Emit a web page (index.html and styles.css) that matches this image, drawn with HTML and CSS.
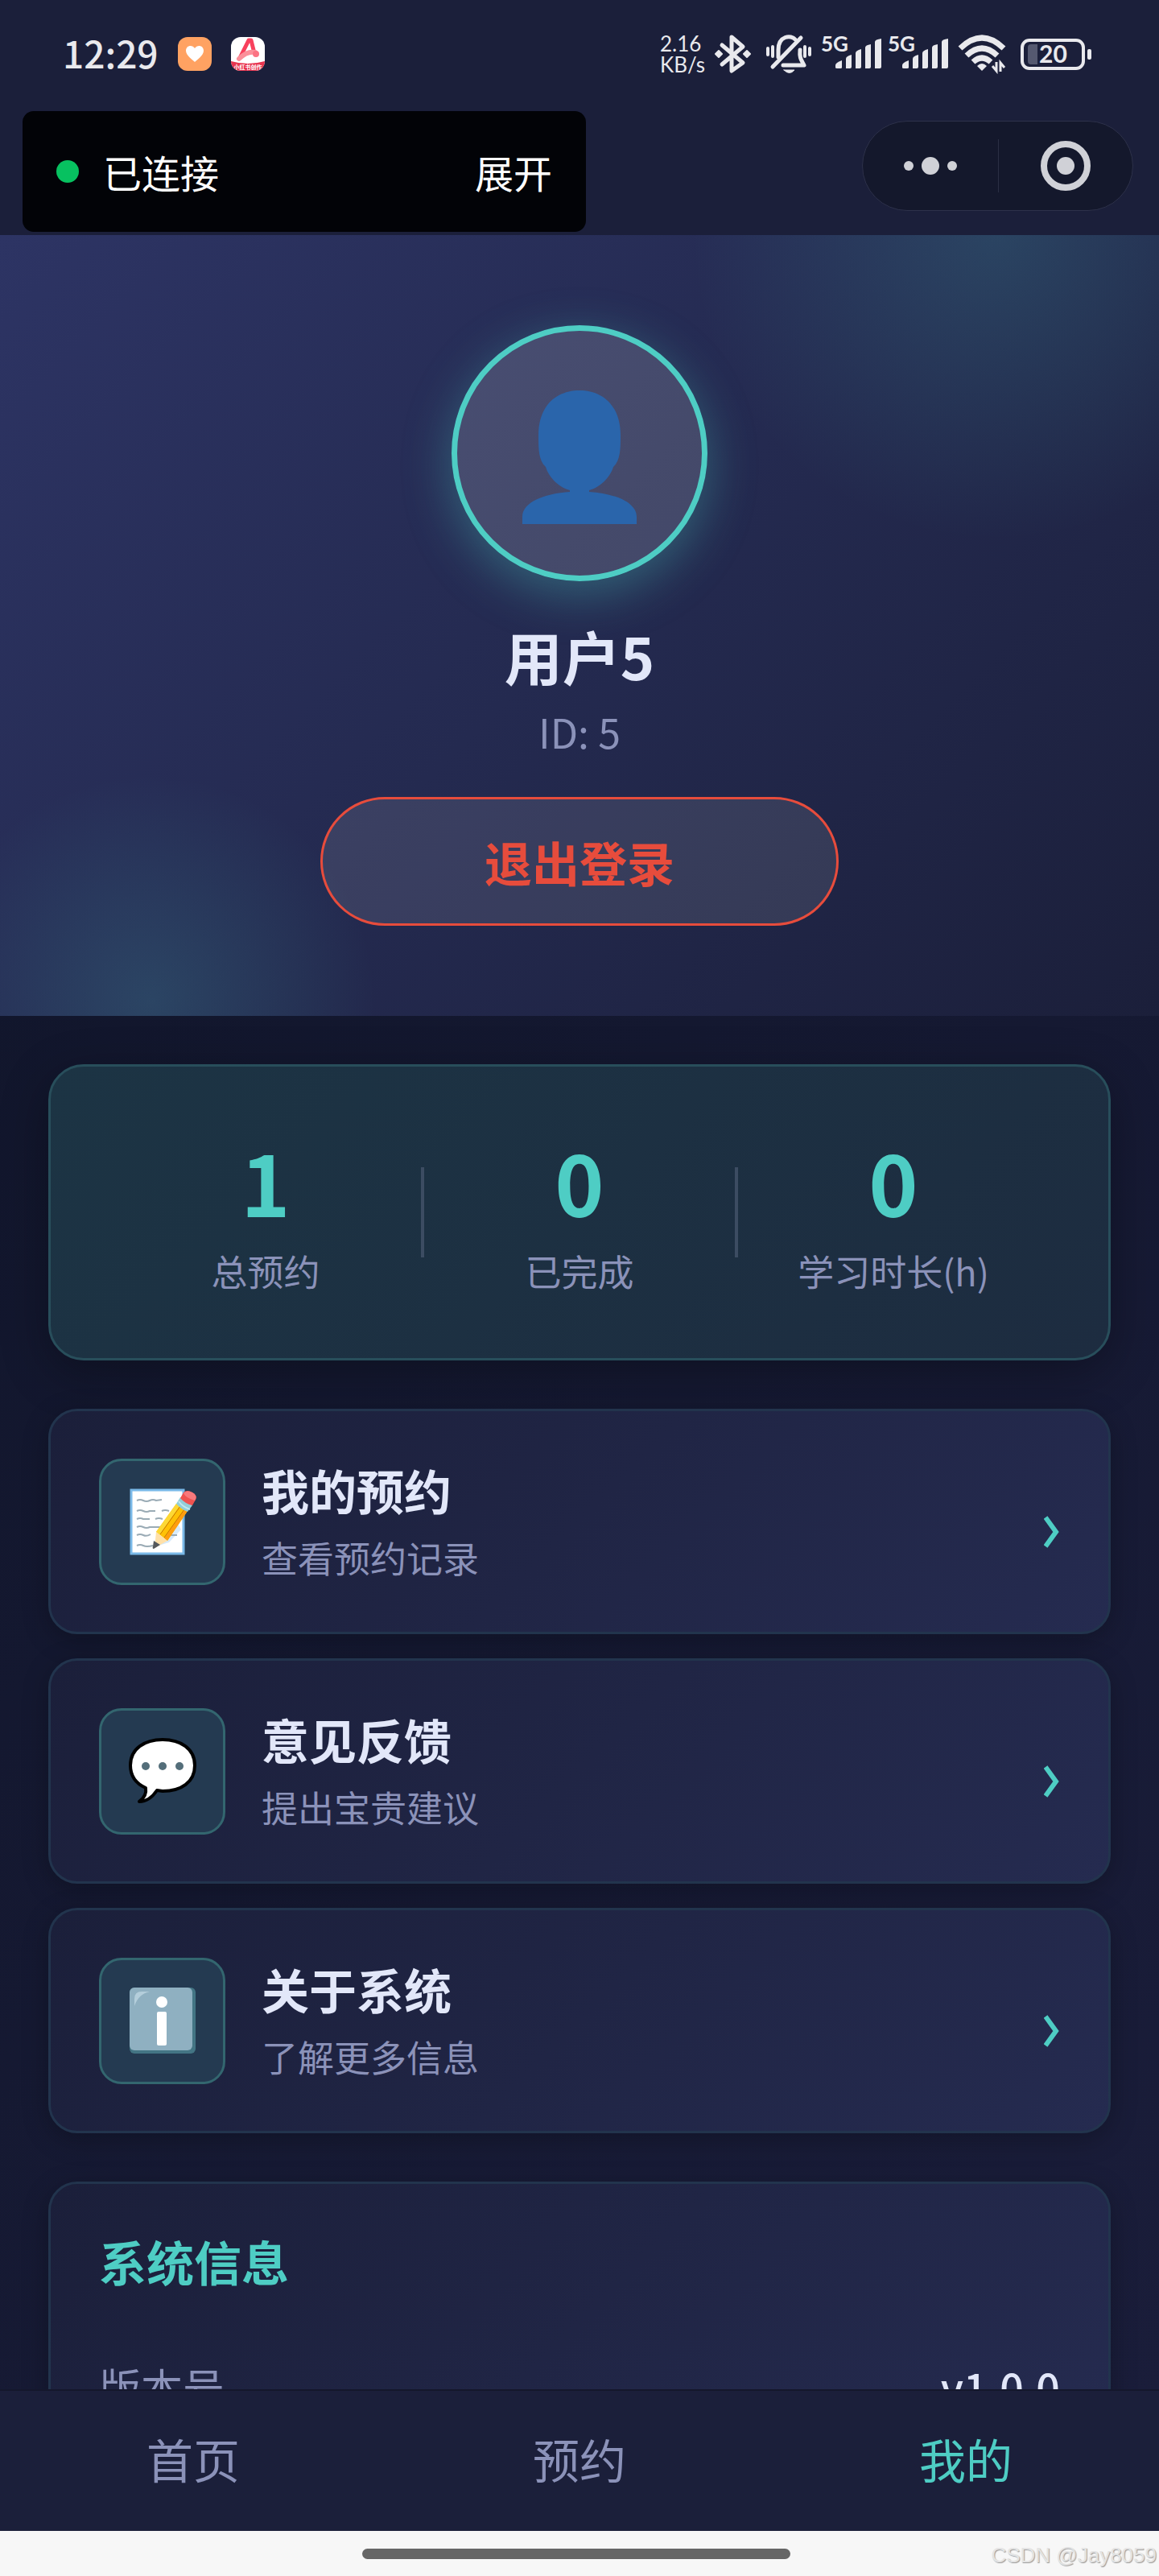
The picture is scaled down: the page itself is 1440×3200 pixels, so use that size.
FILE: index.html
```html
<!DOCTYPE html>
<html lang="zh-CN">
<head>
<meta charset="utf-8">
<meta name="viewport" content="width=device-width, initial-scale=1">
<title>我的</title>
<link rel="stylesheet" href="styles.css">
</head>
<body>
<div class="screen">
  <header class="top">
    <div class="status">
      <div class="status-left">
        <span class="clock">12:29</span>
        <svg class="app-icon" viewBox="0 0 42 42" aria-hidden="true">
          <rect width="42" height="42" rx="12" fill="#ffa262"/>
          <path d="M21 31 C19 29 10 23 10 17 C10 10 18 9 21 14 C24 9 32 10 32 17 C32 23 23 29 21 31Z" fill="#fff"/>
        </svg>
        <svg class="app-icon" viewBox="0 0 42 42" aria-hidden="true">
          <defs><clipPath id="badge"><rect width="42" height="42" rx="12"/></clipPath></defs>
          <g clip-path="url(#badge)">
            <rect width="42" height="42" fill="#fff"/>
            <path d="M0 30 Q21 36 42 30 V42 H0Z" fill="#e8344f"/>
            <path d="M11 26 L22 4 H25 L29 20" fill="none" stroke="#f8405c" stroke-width="5" stroke-linejoin="round"/>
            <path d="M10 27 Q20 17 30 19" fill="none" stroke="#fb8f99" stroke-width="6" stroke-linecap="round"/>
            <circle cx="31" cy="21" r="4" fill="#fb7383"/>
            <text x="21" y="40" class="badge-text" text-anchor="middle">小红书创作</text>
          </g>
        </svg>
      </div>
      <div class="status-right">
        <div class="speed"><span>2.16</span><span>KB/s</span></div>
        <svg width="52" height="50" viewBox="0 0 52 50" fill="none" stroke="#e9e9ed" stroke-width="5" stroke-linejoin="round" stroke-linecap="round" aria-hidden="true">
          <path d="M9 14 L35 36 L21 46 V4 L35 16 L9 38"/>
          <path d="M5 21 l4 4 l-4 4 l-4 -4Z M40 21 l4 4 l-4 4 l-4 -4Z" fill="#e9e9ed" stroke-width="2"/>
        </svg>
        <svg width="56" height="50" viewBox="0 0 56 50" fill="none" stroke="#e9e9ed" stroke-width="5" stroke-linecap="round" stroke-linejoin="round" aria-hidden="true">
          <path d="M43 5 L8 41"/>
          <path d="M15 29 V20 C15 2 31 1 36 7" />
          <path d="M42 20 C41 31 44 33 47 39 H21"/>
          <path d="M2 18 v8 M8 16 v12 M48 16 v12 M54 18 v8" stroke-width="4"/>
          <path d="M22 45 H35 Q29 52 22 45Z" fill="#e9e9ed" stroke-width="1"/>
        </svg>
        <div class="signals">
          <svg width="75" height="50" viewBox="0 0 75 50" fill="#e9e9ed" aria-label="5G">
            <text x="0" y="22" class="network">5G</text>
            <path d="M18 42 V39 Q18 36 26 33 V42 Q26 43 24 43 H20 Q18 43 18 42Z"/>
            <path d="M31 43 V31 Q31 28 38 26 V41 Q38 43 36 43Z"/>
            <path d="M43 43 V24 Q43 21 50 19 V41 Q50 43 48 43Z"/>
            <path d="M55 43 V17 Q55 14 62 13 V41 Q62 43 60 43Z"/>
            <path d="M67 43 V10 Q67 7 75 6 V41 Q75 43 73 43Z"/>
          </svg>
          <svg width="75" height="50" viewBox="0 0 75 50" fill="#e9e9ed" aria-label="5G">
            <text x="0" y="22" class="network">5G</text>
            <path d="M18 42 V39 Q18 36 26 33 V42 Q26 43 24 43 H20 Q18 43 18 42Z"/>
            <path d="M31 43 V31 Q31 28 38 26 V41 Q38 43 36 43Z"/>
            <path d="M43 43 V24 Q43 21 50 19 V41 Q50 43 48 43Z"/>
            <path d="M55 43 V17 Q55 14 62 13 V41 Q62 43 60 43Z"/>
            <path d="M67 43 V10 Q67 7 75 6 V41 Q75 43 73 43Z"/>
          </svg>
        </div>
        <svg width="66" height="50" viewBox="0 0 66 50" fill="none" stroke="#e9e9ed" stroke-width="7" aria-hidden="true">
          <path d="M3 18 Q30 -8 57 18"/>
          <path d="M11 27 Q30 9 49 27"/>
          <path d="M19 35 Q30 25 41 35"/>
          <path d="M30 46 L24 40 Q30 34 36 40Z" fill="#e9e9ed" stroke="none"/>
          <path d="M48 35 V46 L43 40 M53 47 V36 L58 42" stroke-width="3"/>
        </svg>
        <svg width="88" height="50" viewBox="0 0 88 50" aria-label="20">
          <rect x="2" y="8" width="76" height="35" rx="9" fill="none" stroke="#e9e9ed" stroke-width="4"/>
          <path d="M21 13 H13 Q9 13 9 17 V34 Q9 38 13 38 H21Z" fill="#555970"/>
          <text x="23" y="36" class="charge">20</text>
          <rect x="83" y="19" width="5" height="13" rx="2" fill="#e9e9ed"/>
        </svg>
      </div>
    </div>
    <div class="toolbar">
      <div class="debug">
        <span class="debug-dot"></span>
        <span class="debug-state">已连接</span>
        <button class="debug-open" type="button">展开</button>
      </div>
      <div class="capsule">
        <button type="button" class="capsule-button" aria-label="更多">
          <svg width="70" height="22" viewBox="0 0 70 22" fill="#d0d1d7"><circle cx="8" cy="11" r="6"/><circle cx="35" cy="11" r="11"/><circle cx="62" cy="11" r="6"/></svg>
        </button>
        <button type="button" class="capsule-button" aria-label="关闭">
          <svg width="64" height="64" viewBox="0 0 64 64"><circle cx="32" cy="32" r="27" fill="none" stroke="#d0d1d7" stroke-width="8"/><circle cx="32" cy="32" r="11" fill="#d0d1d7"/></svg>
        </button>
      </div>
    </div>
  </header>

  <main class="page">
    <section class="hero">
      <div class="avatar">
        <svg width="142" height="166" viewBox="0 0 142 166" fill="#2a65ab" aria-hidden="true">
          <path d="M71 0 C98 0 122 17 122 56 C122 72 122 87 113 95 C109 109 95 121 83 124 V126 C115 128 142 139 142 157 V166 H0 V157 C0 139 27 128 59 126 V124 C47 121 33 109 29 95 C20 87 20 72 20 56 C20 17 44 0 71 0Z"/>
        </svg>
      </div>
      <h1 class="name">用户5</h1>
      <p class="user-id">ID: 5</p>
      <button class="logout" type="button">退出登录</button>
    </section>

    <div class="content">
      <section class="stats">
        <div class="stat"><strong>1</strong><span>总预约</span></div>
        <div class="stat"><strong>0</strong><span>已完成</span></div>
        <div class="stat"><strong>0</strong><span>学习时长(h)</span></div>
      </section>

      <nav class="menu">
        <a class="card menu-item" href="#bookings">
          <span class="menu-icon">
            <svg width="84" height="84" viewBox="0 0 84 84" aria-hidden="true">
              <rect x="3" y="3" width="65" height="79" fill="#fff" stroke="#7ab9e8" stroke-width="3"/>
              <path d="M65 52 L50 68 L30 74 L60 43Z" fill="#d6eafb"/>
              <path d="M10 16 q4 -2 8 0 t8 0 t8 0 l7 -1 M10 29 q4 -2 8 0 t8 0 h7 M41 29 q4 -2 9 0 M10 39 q4 -2 8 0 h8 M33 39 q4 -2 9 0 M10 49 q4 -2 8 0 t8 0 h14 M10 59 q4 -2 8 0 t9 -1 M10 72 q4 -2 8 0 t12 0 M52 59 h8" fill="none" stroke="#9aabb5" stroke-width="2"/>
              <path d="M34 55 L59 20 L73 29 L48 66Z" fill="#ffc107"/>
              <path d="M34 55 L59 20 L63 23 L38 59Z" fill="#fdd835"/>
              <path d="M44 63 L69 27 L73 29 L48 66Z" fill="#ff9e0f"/>
              <path d="M39 58 L64 23 M44 62 L69 27" stroke="#c77700" stroke-width="1"/>
              <path d="M34 55 L48 66 L32 75Z" fill="#ffe0a8"/>
              <path d="M31 66 L39 71 L31 76 Q29 76 30 73Z" fill="#55595c"/>
              <path d="M59 20 L64 12 L79 22 L73 30 Q65 27 59 20Z" fill="#92cfd9"/>
              <path d="M62 17 Q67 24 76 27" fill="none" stroke="#c4e8ee" stroke-width="2"/>
              <path d="M64 13 L68 6 Q72 2 79 6 Q86 10 83 15 L79 22 Q70 20 64 13Z" fill="#ef5350"/>
              <path d="M68 7 Q71 13 82 16 Q86 10 79 6 Q72 2 68 7Z" fill="#f8797c"/>
            </svg>
          </span>
          <span class="menu-text"><b>我的预约</b><span>查看预约记录</span></span>
          <svg class="chevron" width="20" height="40" viewBox="0 0 20 40" aria-hidden="true"><path d="M2 2 L15 20 L2 38"/></svg>
        </a>
        <a class="card menu-item" href="#feedback">
          <span class="menu-icon">
            <svg width="84" height="84" viewBox="0 0 84 84" aria-hidden="true">
              <path d="M42 3 C64 3 82 14 82 35 C82 56 65 67 42 67 L35 66 C29 75 21 80 13 80 C20 75 22 69 21 63 C10 58 2 49 2 35 C2 14 20 3 42 3Z" fill="#fff" stroke="#000" stroke-width="4" stroke-linejoin="round"/>
              <circle cx="21" cy="36" r="5" fill="#546e7a"/><circle cx="42" cy="36" r="5" fill="#546e7a"/><circle cx="63" cy="36" r="5" fill="#546e7a"/>
            </svg>
          </span>
          <span class="menu-text"><b>意见反馈</b><span>提出宝贵建议</span></span>
          <svg class="chevron" width="20" height="40" viewBox="0 0 20 40" aria-hidden="true"><path d="M2 2 L15 20 L2 38"/></svg>
        </a>
        <a class="card menu-item" href="#about">
          <span class="menu-icon">
            <svg width="84" height="84" viewBox="0 0 84 84" aria-hidden="true">
              <rect x="1" y="1" width="82" height="82" rx="6" fill="#437584"/>
              <rect x="1" y="1" width="78" height="78" rx="6" fill="#8fb0c1"/>
              <path d="M7 24 V15 Q7 6 16 6 H26 Q12 9 7 24Z" fill="#b4cedb"/>
              <circle cx="41" cy="19" r="7" fill="#fff"/><rect x="35" y="31" width="12" height="42" rx="2" fill="#fff"/>
            </svg>
          </span>
          <span class="menu-text"><b>关于系统</b><span>了解更多信息</span></span>
          <svg class="chevron" width="20" height="40" viewBox="0 0 20 40" aria-hidden="true"><path d="M2 2 L15 20 L2 38"/></svg>
        </a>
      </nav>

      <section class="card info">
        <h2>系统信息</h2>
        <dl class="info-row"><dt>版本号</dt><dd>v1.0.0</dd></dl>
      </section>
    </div>
  </main>

  <nav class="tabs">
    <a href="#home">首页</a>
    <a href="#booking">预约</a>
    <a href="#mine" class="active" aria-current="page">我的</a>
  </nav>
  <footer class="gesture">
    <span class="pill"></span>
    <span class="watermark">CSDN @Jay8059</span>
  </footer>
</div>
</body>
</html>
```

FILE: styles.css
```css
* { box-sizing: border-box; }

body {
  margin: 0;
  background: #13172b;
  color: #e2e7f9;
  font-family: "Noto Sans CJK SC", sans-serif;
}

h1, h2, p, dl, dd { margin: 0; }
a { color: inherit; text-decoration: none; }
button { font: inherit; cursor: pointer; }
svg { display: block; flex: none; }

.screen {
  display: flex;
  flex-direction: column;
  height: 100vh;
  overflow: hidden;
}

/* Status bar and mini-program toolbar */
.top {
  flex: none;
  background: #1b1f3a;
  color: #e9e9ed;
}
.status {
  display: flex;
  justify-content: space-between;
  align-items: center;
  height: 134px;
  padding: 0 84px 0 78px;
}
.status-left { display: flex; align-items: center; gap: 24px; }
.status-right { display: flex; align-items: center; gap: 12px; }
.clock {
  padding-bottom: 4px;
  font-size: 46px;
  line-height: 50px;
  font-weight: 500;
}
.app-icon { width: 42px; height: 42px; }
.badge-text { font-size: 7px; font-weight: 700; fill: #fff; }
.speed {
  display: flex;
  flex-direction: column;
  font-family: Lato, sans-serif;
  font-size: 26px;
  line-height: 26px;
}
.signals { display: flex; gap: 8px; }
.network { font-family: Lato, sans-serif; font-size: 26px; font-weight: 700; }
.charge { font-family: Lato, sans-serif; font-size: 30px; font-weight: 700; fill: #e9e9ed; }

.toolbar {
  display: flex;
  justify-content: space-between;
  align-items: flex-start;
  padding: 4px 32px 4px 28px;
}
.debug {
  display: flex;
  align-items: center;
  width: 700px;
  height: 150px;
  padding: 0 42px;
  border-radius: 14px;
  background: #020307;
  color: #fff;
  font-size: 48px;
  line-height: 64px;
}
.debug-dot {
  width: 28px;
  height: 28px;
  margin-right: 30px;
  border-radius: 50%;
  background: #07c160;
}
.debug-open {
  margin-left: auto;
  padding: 0;
  border: 0;
  background: none;
  color: inherit;
}
.capsule {
  display: grid;
  grid-template-columns: 1fr 1fr;
  width: 337px;
  height: 112px;
  margin-top: 12px;
  padding: 22px 0;
  border: 1px solid #2d314a;
  border-radius: 56px;
  background: #14182c;
}
.capsule-button {
  display: flex;
  align-items: center;
  justify-content: center;
  padding: 0;
  border: 0;
  background: none;
}
.capsule-button + .capsule-button { border-left: 1px solid #2b2f44; }

.page {
  flex: 1;
  min-height: 0;
  overflow: hidden;
  background: linear-gradient(135deg, #0f1428, #1a1d3a);
}
.hero {
  display: flex;
  flex-direction: column;
  align-items: center;
  padding: 112px 60px;
  background:
    radial-gradient(circle 380px at 86% 0, rgba(78, 205, 196, 0.16), transparent),
    radial-gradient(circle 280px at 13% 98%, rgba(78, 205, 196, 0.16), transparent),
    linear-gradient(135deg, #2d3464, #242a50 50%, #1b1f3a);
}
.avatar {
  display: flex;
  align-items: center;
  justify-content: center;
  width: 318px;
  height: 318px;
  padding-top: 10px;
  border: 7px solid #4ecdc4;
  border-radius: 50%;
  background: rgba(255, 255, 255, 0.15);
  box-shadow: 0 16px 60px rgba(78, 205, 196, 0.35);
}
.name {
  margin-top: 44px;
  font-size: 72px;
  line-height: 96px;
  font-weight: 700;
}
.user-id {
  margin-top: 16px;
  color: #8b92b9;
  font-size: 50px;
  line-height: 60px;
}
.logout {
  width: 644px;
  height: 160px;
  margin-top: 52px;
  border: 3px solid #e74c3c;
  border-radius: 80px;
  background: rgba(255, 255, 255, 0.1);
  color: #e74c3c;
  font-size: 59px;
  font-weight: 700;
}

.content {
  display: flex;
  flex-direction: column;
  gap: 60px;
  padding: 60px;
}
.stats {
  display: grid;
  grid-template-columns: repeat(3, 1fr);
  align-items: center;
  padding: 80px 72px;
  border: 3px solid #284e5b;
  border-radius: 44px;
  background: linear-gradient(135deg, #1c3444, #1d2c40);
  box-shadow: 0 16px 60px rgba(0, 0, 0, 0.3);
}
.stat {
  display: flex;
  flex-direction: column;
  align-items: center;
  gap: 26px;
  padding-top: 4px;
  position: relative;
}
.stat + .stat::before {
  content: "";
  position: absolute;
  left: -2px;
  top: 50%;
  width: 4px;
  height: 112px;
  margin-top: -56px;
  background: #3c4c62;
}
.stat strong {
  color: #4ecdc4;
  font-size: 104px;
  line-height: 116px;
}
.stat span { color: #8b92b9; font-size: 45px; line-height: 56px; }

.card {
  border: 3px solid #22344d;
  border-radius: 36px;
  background: linear-gradient(135deg, #1b1f3a, #252b50);
  box-shadow: 0 8px 32px rgba(0, 0, 0, 0.25);
}
.menu { display: flex; flex-direction: column; gap: 30px; }
.menu-item {
  display: flex;
  align-items: center;
  height: 280px;
  padding: 0 60px;
}
.menu-icon {
  display: flex;
  align-items: center;
  justify-content: center;
  width: 157px;
  height: 157px;
  border: 3px solid #33666f;
  border-radius: 28px;
  background: #243a51;
}
.menu-text {
  display: flex;
  flex-direction: column;
  flex: 1;
  gap: 18px;
  margin-left: 45px;
}
.menu-text b { font-size: 59px; line-height: 72px; }
.menu-text span { color: #8b92b9; font-size: 45px; line-height: 60px; }
.chevron {
  margin-top: 26px;
  fill: none;
  stroke: #4ecdc4;
  stroke-width: 6;
}

.info {
  display: flex;
  flex-direction: column;
  gap: 80px;
  padding: 56px 60px;
}
.info h2 {
  color: #4ecdc4;
  font-size: 59px;
  line-height: 80px;
}
.info-row {
  display: flex;
  justify-content: space-between;
  font-size: 52px;
  line-height: 72px;
}
.info-row dt { color: #8b92b9; }
.info-row dd { font-weight: 500; }

/* Bottom navigation */
.tabs {
  flex: none;
  display: grid;
  grid-template-columns: repeat(3, 1fr);
  align-items: center;
  height: 176px;
  padding-bottom: 6px;
  border-top: 2px solid #14172b;
  background: #1b1f3a;
  color: #8b92b9;
  font-size: 58px;
  line-height: 80px;
  text-align: center;
}
.tabs .active { color: #4ecdc4; }

.gesture {
  flex: none;
  display: grid;
  grid-template-columns: 450fr 532px 458fr;
  align-items: center;
  height: 56px;
  background: #f7f7f7;
}
.pill {
  grid-column: 2;
  height: 13px;
  border-radius: 7px;
  background: #666;
}
.watermark {
  justify-self: end;
  padding: 4px 3px 0 0;
  color: #e4e4e4;
  font-family: "Liberation Sans", sans-serif;
  font-size: 26px;
  line-height: 36px;
  text-shadow: 1px 1px 1px #999;
}
```
